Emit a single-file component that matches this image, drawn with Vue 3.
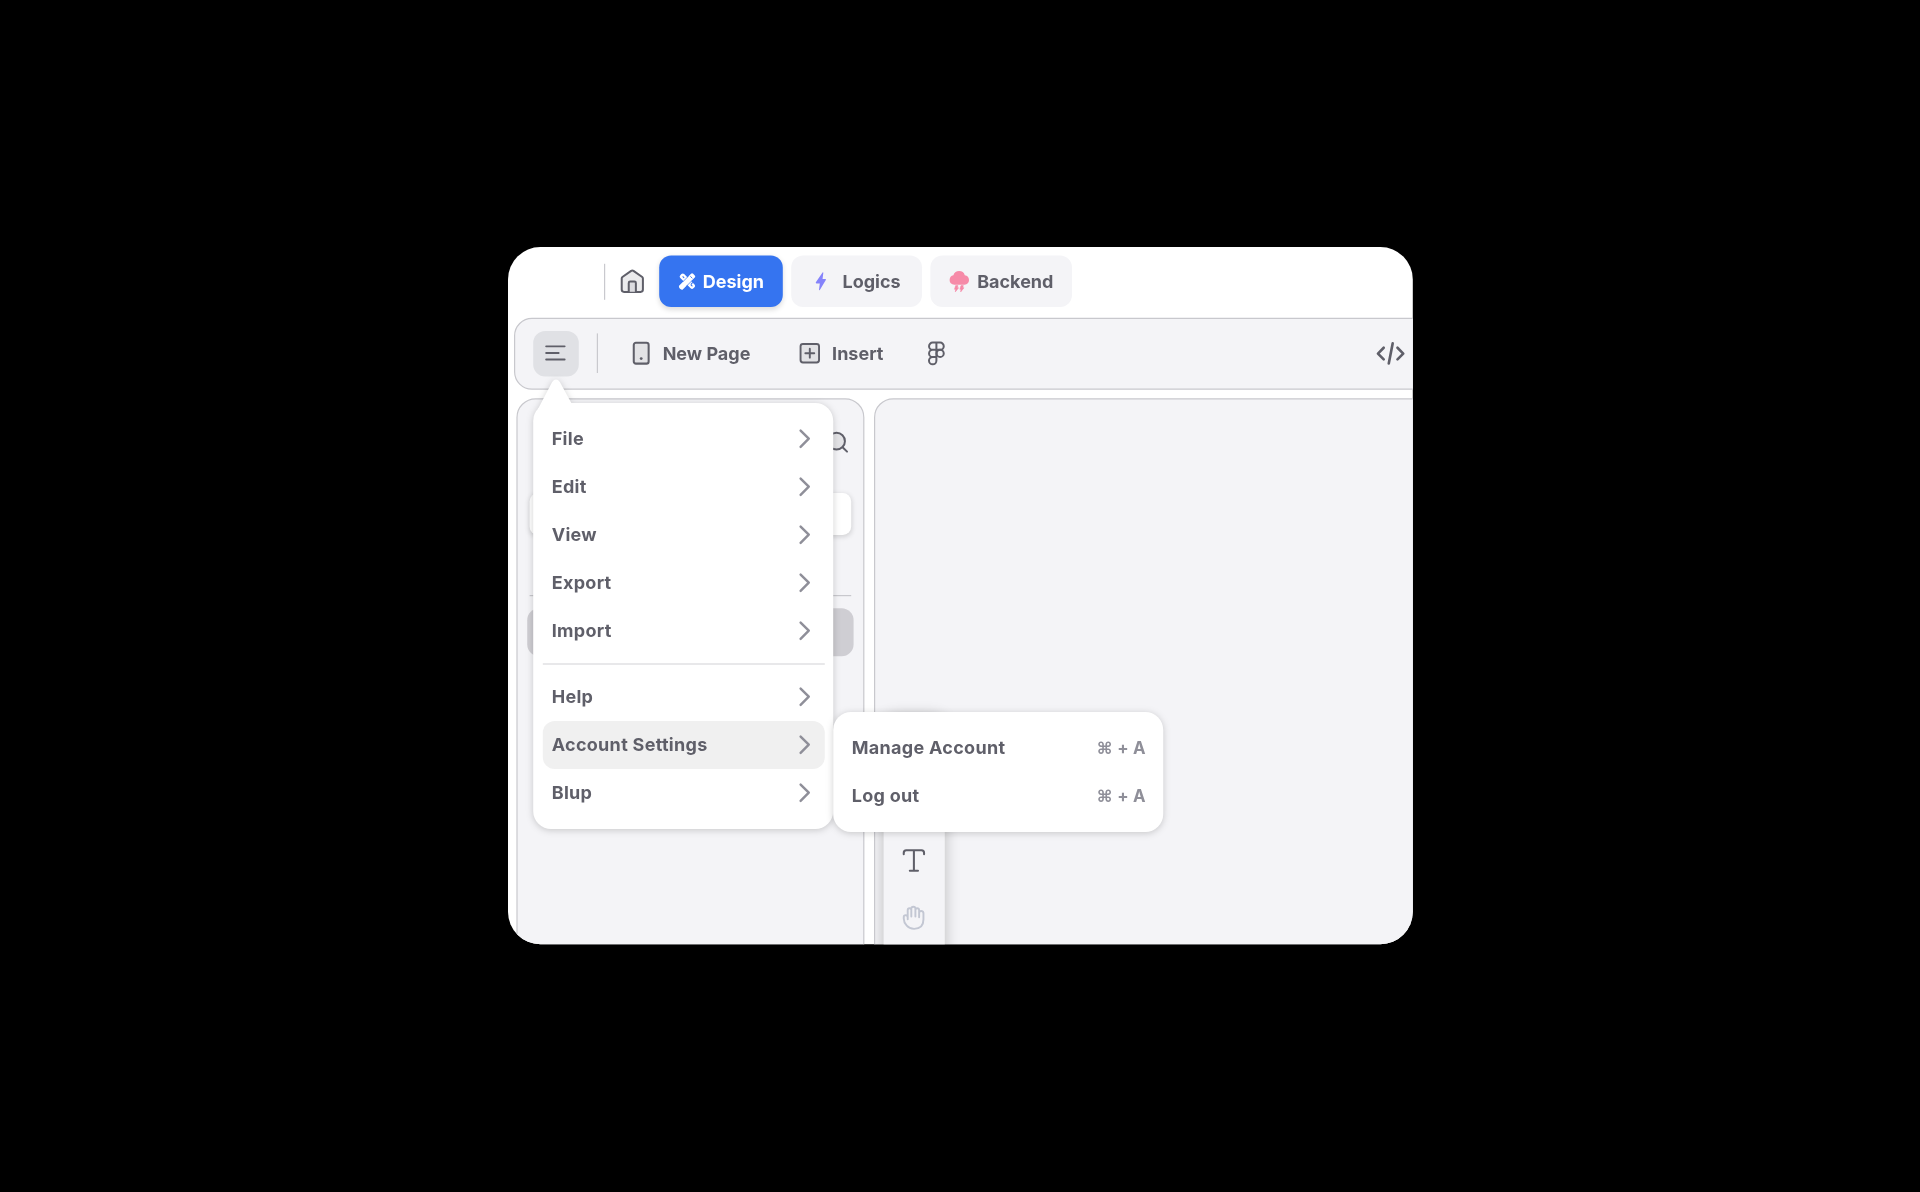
<script setup>
const mainItems = ['File', 'Edit', 'View', 'Export', 'Import']
const moreItems = ['Help', 'Account Settings', 'Blup']
const accountItems = ['Manage Account', 'Log out']
const active = 'Account Settings'
</script>

<template>
  <div class="stage">
    <div class="card">
      <header class="tabs">
        <span class="vline tabs-line"></span>
        <svg class="home" viewBox="0 0 20 20" fill="none" stroke="#5f5f69" stroke-width="1.75" stroke-linejoin="round" stroke-linecap="round">
          <path fill="#ebebed" d="M.8 7.6 Q.8 6.8 1.4 6.3 L9 .9 Q10 .2 11 .9 L18.6 6.3 Q19.2 6.8 19.2 7.6 V17.2 Q19.2 19.2 17.2 19.2 H2.8 Q.8 19.2 .8 17.2 Z" />
          <path fill="#dcdce0" d="M6.900 19 V11.400 Q6.900 10.200 8.100 10.200 H11.900 Q13.100 10.200 13.100 11.400 V19" />
        </svg>
        <button class="tab tab-design">
          <svg class="tools" viewBox="0 0 16 16">
            <g transform="rotate(45 8 8)">
              <rect x="-1.500" y="5.200" width="19" height="5.600" rx="2" fill="#fff" />
              <path d="M1.500 8h1.400M13.200 8h1.600M12.800 5.400v1.600" stroke="#3574f0" stroke-width="1.100" stroke-linecap="round" />
            </g>
            <g transform="rotate(-45 8 8)">
              <path d="M-2.800 8 Q-2.600 5.400-1.400 5.300H16Q17.500 5.300 17.500 6.800V9.200Q17.500 10.700 16 10.700H-1.400Q-2.600 10.600-2.800 8Z" fill="#fff" />
              <path d="M4 5.100H12M4 10.900H12" stroke="#3574f0" stroke-width=".7" />
              <path d="M13.700 6.500V9.500" stroke="#3574f0" stroke-width=".9" />
            </g>
          </svg>
          Design
        </button>
        <button class="tab tab-logics">
          <svg class="bolt" viewBox="0 0 10 17" fill="#8583fb"><path d="M6.500 .2 Q7.300-.2 7.200 .8 L6.500 6.200 H9 Q10 6.300 9.500 7.200 L4 16.200 Q3.200 17 3.300 15.900 L4 10.300 H1 Q-.1 10.200 .4 9.200 Z" /></svg>
          Logics
        </button>
        <button class="tab tab-backend">
          <svg class="cloud" viewBox="0 0 17 18.500" fill="#f68aa8">
            <path d="M4.200 12 Q0 11.700 0 7.900 Q.1 4.400 3.300 3.700 Q4.600 0 8.400 0 Q12.200 0 13.300 3.700 Q16.900 4.400 17 7.900 Q16.900 11.700 13 12 Z" />
            <path stroke="#f68aa8" stroke-width=".5" stroke-linejoin="round" d="M5.300 12.800H7.300L6.800 14.700H7.900L5 18.300 5.300 16H4.300zM10 12.800H12L11.500 14.700H12.600L9.700 18.300 10 16H9z" />
          </svg>
          Backend
        </button>
      </header>

      <div class="toolbar">
        <button class="burger">
          <svg viewBox="0 0 17 13" fill="none" stroke="#5f5f69" stroke-width="1.600" stroke-linecap="round"><path d="M.8 .8H16.200M.8 6.300H11.200M.8 11.800H16.200" /></svg>
        </button>
        <span class="vline bar-line"></span>
        <div class="tool new-page">
          <svg viewBox="0 0 14 19" fill="none" width="14" height="19"><rect x=".8" y=".8" width="12.400" height="17.400" rx="1.800" fill="#e3e3e6" stroke="#5f5f69" stroke-width="1.700" /><circle cx="7" cy="14" r="1.200" fill="#5f5f69" /></svg>
          New Page
        </div>
        <div class="tool insert">
          <svg viewBox="0 0 17 17" fill="none" width="17" height="17" stroke="#5f5f69" stroke-width="1.600"><rect x=".8" y=".8" width="15.400" height="15.400" rx="2" fill="#e3e3e6" /><path d="M8.500 4.800v7.400M4.800 8.500h7.400" stroke-linecap="round" /></svg>
          Insert
        </div>
        <svg class="figma" viewBox="0 0 14 20" fill="none" stroke="#5f5f69" stroke-width="1.700"><path d="M7 .7H3.800a3.050 3.050 0 0 0 0 6.100H7zM7 .7h3.200a3.050 3.050 0 0 1 0 6.100H7zM7 6.800H3.800a3.050 3.050 0 0 0 0 6.100H7zM7 12.900H3.800A3.150 3.150 0 1 0 7 16z" /><circle cx="10.200" cy="9.850" r="3.050" /></svg>
        <svg class="code" viewBox="0 0 24 19" fill="none" stroke="#5f5f69" stroke-width="2.300" stroke-linecap="round" stroke-linejoin="round"><path d="M6 5.200 1 10.300l5 5M18 5.200l5 5.100-5 5M13.800 1.400l-3.400 17.500" /></svg>
      </div>

      <div class="workspace">
        <aside class="side">
          <div class="side-head">
            <svg viewBox="0 0 18 18" fill="none" stroke="#5f5f69" stroke-width="1.700" stroke-linecap="round"><circle cx="8" cy="8" r="7.200" fill="#e3e3e6" /><path d="M13.400 13.400 17 17" /></svg>
          </div>
          <div class="field"></div>
          <div class="side-rule"></div>
          <div class="selected"></div>
        </aside>
        <main class="canvas">
          <div class="palette">
            <svg class="type" viewBox="0 0 19 19" fill="none" stroke="#5f5f69" stroke-width="1.750" stroke-linecap="round" stroke-linejoin="round"><path d="M.8 4.200V3Q.8 .8 3 .8H16Q18.200 .8 18.200 3V4.200M9.500 .8V18.200M6 18.200H13" /></svg>
            <svg class="hand" viewBox="0 0 18 20" fill="none" stroke="#c3c7d3" stroke-width="1.600" stroke-linecap="round" stroke-linejoin="round"><path d="M4.100 9.800V3.600Q4.100 2.100 5.600 2.100T7.100 3.600M7.100 9V2.300Q7.100 .8 8.800 .8T10.500 2.300V9M10.500 3.500Q10.500 2 12 2T13.600 3.500V9.500M13.600 5.700Q13.700 4.400 15.300 4.400T17.200 6V11.500Q17.200 19.200 9.400 19.200 5.500 19.200 3.300 16.600 .8 13.800 .8 10.800V9.400Q.8 7.800 2.400 7.800 4.100 7.900 4.100 9.800V11.300" /></svg>
          </div>
        </main>
      </div>

      <div class="menus">
        <nav class="menu">
          <svg class="tip" viewBox="0 0 30 25" fill="#fff"><path d="M0 25 L11.800 2.400 Q15 -1.600 18.200 2.400 L28 20.500 V25Z" /></svg>
          <div v-for="item in mainItems" :key="item" class="row">
            {{ item }}
            <svg class="chev" viewBox="0 0 10 18"><path d="M1 1 9 9 1 17" /></svg>
          </div>
          <div class="rule"></div>
          <div v-for="item in moreItems" :key="item" class="row" :class="{ active: item === active }">
            {{ item }}
            <svg class="chev" viewBox="0 0 10 18"><path d="M1 1 9 9 1 17" /></svg>
          </div>
        </nav>
        <nav class="menu submenu">
          <div v-for="item in accountItems" :key="item" class="row">
            {{ item }}
            <span class="keys">⌘ + A</span>
          </div>
        </nav>
      </div>
    </div>
  </div>
</template>

<style>
body { background: #000; }
</style>

<style scoped>
* { box-sizing: border-box; }
.stage {
  height: 1192px;
  padding: 247px 0 0 508px;
  overflow: hidden;
  background: #000;
}
.card {
  position: relative;
  display: flex;
  flex-direction: column;
  width: 753.700px;
  height: 581px;
  overflow: hidden;
  border-radius: 27px;
  background: #fff;
  color: #5f5f69;
  font: 650 15px/20px Inter, sans-serif;
  letter-spacing: 0;
  transform: scale(1.2);
  transform-origin: 0 0;
}
svg { display: block; flex: none; overflow: visible; }
button { border: 0; padding: 0; font: inherit; letter-spacing: inherit; color: inherit; }
.vline { width: 1.200px; background: #c9c9ce; }
.tabs {
  display: flex;
  align-items: center;
  flex: none;
  height: 58.500px;
  padding: 0 0 1.400px 80px;
}
.tabs-line { height: 30px; }
.home { width: 19.200px; height: 19.200px; margin: 0 12.900px 0 13px; }
.tab {
  display: flex;
  align-items: center;
  height: 42.500px;
  margin-right: 7.500px;
  border-radius: 10px;
  background: #f4f4f7;
}
.tab-design { width: 102.500px; padding-left: 16.700px; background: #3574f0; color: #fff; box-shadow: 0 2px 4px rgba(0, 0, 0, .13); }
.tools { width: 13px; height: 13px; margin-right: 6.400px; }
.tab-logics { width: 108.500px; padding-left: 19.800px; }
.bolt { width: 9.500px; height: 15.500px; margin-right: 13.200px; }
.tab-backend { width: 117.600px; padding-left: 16px; }
.cloud { width: 16.200px; height: 17.600px; margin-right: 6.500px; }
.toolbar {
  display: flex;
  align-items: center;
  flex: none;
  width: 770px;
  height: 60px;
  margin-left: 5.200px;
  border: 1px solid #c8c8cd;
  border-radius: 15px;
  background: #f4f4f7;
}
.burger {
  display: grid;
  place-items: center;
  width: 38px;
  height: 38px;
  margin-left: 14.800px;
  border-radius: 10px;
  background: #e0e1e5;
}
.burger svg { width: 17px; height: 13px; }
.bar-line { height: 33px; margin-left: 15px; }
.tool { display: flex; align-items: center; }
.new-page { width: 109px; gap: 10.700px; margin-left: 29px; }
.insert { gap: 10px; margin-left: 29.900px; width: 76px; }
.figma { width: 14px; height: 19.600px; margin-left: 31.300px; }
.code { width: 23px; height: 18.200px; margin-left: 359.600px; }
.workspace { display: flex; flex: none; gap: 8px; margin: 7.500px 0 0 7px; height: 500px; }
.side, .canvas { flex: none; border: 1px solid #c8c8cd; border-radius: 16px; background: #f4f4f7; }
.side { width: 289.500px; padding: 27px 8px 0; }
.side-head { display: flex; justify-content: flex-end; padding-right: 3.700px; }
.side-head svg { width: 17.500px; height: 17.500px; }
.field { height: 35px; margin: 33px 2px 0; border-radius: 7px; background: #fff; box-shadow: 0 1.500px 4px rgba(0, 0, 0, .14); }
.side-rule { height: 1px; margin: 50px 2px 0; background: #c8c8cd; }
.selected { height: 40px; margin-top: 10px; border-radius: 10px; background: #cfced3; }
.canvas { width: 500px; padding: 261px 0 0 7px; overflow: hidden; }
.palette {
  display: flex;
  flex-direction: column;
  align-items: center;
  width: 51px;
  height: 260px;
  padding-top: 114.400px;
  border-radius: 10px;
  background: #f4f4f7;
  box-shadow: 0 3px 12px rgba(0, 0, 0, .24);
}
.type { width: 18.500px; height: 18.500px; }
.hand { width: 18px; height: 20px; margin-top: 28px; }
.menus { position: absolute; left: 21.400px; top: 130px; display: flex; align-items: flex-start; letter-spacing: .25px; }
.menu {
  position: relative;
  width: 250px;
  padding: 10px 7.500px;
  border-radius: 15px;
  background: #fff;
  filter: drop-shadow(0 1.500px 3px rgba(0, 0, 0, .19));
}
.tip { position: absolute; left: 3.400px; top: -20px; width: 30px; height: 25px; }
.row {
  display: flex;
  align-items: center;
  justify-content: space-between;
  height: 40px;
  padding: 0 12.100px 0 7.500px;
  border-radius: 10px;
}
.row.active { background: #f0f0f0; }
.chev { width: 8.500px; height: 15.500px; fill: none; stroke: #8f8f99; stroke-width: 2.400; stroke-linecap: round; stroke-linejoin: round; }
.rule { height: 1.500px; margin: 6.500px 0; background: #d9d9dc; }
.submenu { width: 275px; margin-top: 257px; transform: translateY(.5px); }
.submenu .row { padding-right: 7.500px; }
.keys { color: #8f8f99; font-size: 14px; letter-spacing: .15px; }
</style>
